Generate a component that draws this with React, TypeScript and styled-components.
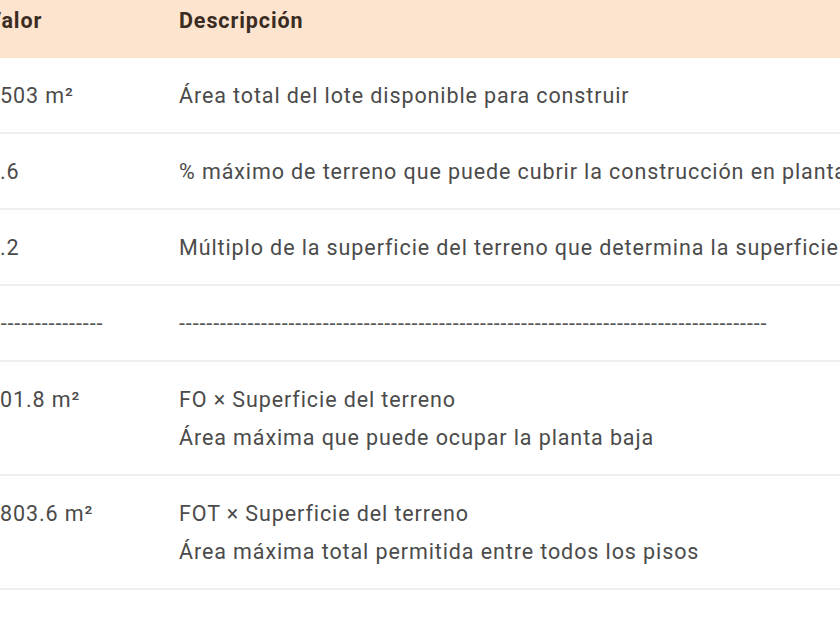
import React from 'react';
import styled, { createGlobalStyle } from 'styled-components';

const GlobalStyle = createGlobalStyle`
    html, body {
        margin: 0;
        padding: 0;
        background: #ffffff;
    }
`;

const Page = styled.div`
    width: 840px;
    height: 630px;
    overflow: hidden;
    background: #ffffff;
    font-family: Roboto, 'Noto Sans', Arial, sans-serif;
`;

const Table = styled.table`
    margin: -18px 0 0 -25px;
    border-collapse: collapse;
    width: 1200px;
    table-layout: fixed;
`;

const HeadCell = styled.th`
    background: #fde4cf;
    color: #3a2c22;
    font-weight: 700;
    font-size: 21.5px;
    letter-spacing: 0.9px;
    line-height: 38px;
    text-align: left;
    padding: 20px 12px 18px;
    white-space: nowrap;
`;

const Cell = styled.td`
    color: #4b4b4b;
    font-size: 21.5px;
    letter-spacing: 0.9px;
    line-height: 38px;
    text-align: left;
    vertical-align: top;
    padding: 19px 12px 17px;
    border-bottom: 2px solid #efefef;
    white-space: nowrap;
`;

const Dashes = styled.span`
    color: #555555;
`;

type Row = {
    value: string;
    lines: string[];
    dashed?: boolean;
};

const rows: Row[] = [
    { value: '1503 m²', lines: ['Área total del lote disponible para construir'] },
    {
        value: '0.6',
        lines: ['% máximo de terreno que puede cubrir la construcción en planta baja'],
    },
    {
        value: '1.2',
        lines: ['Múltiplo de la superficie del terreno que determina la superficie total construible'],
    },
    { value: '-'.repeat(17), lines: ['-'.repeat(86)], dashed: true },
    {
        value: '901.8 m²',
        lines: ['FO × Superficie del terreno', 'Área máxima que puede ocupar la planta baja'],
    },
    {
        value: '1803.6 m²',
        lines: ['FOT × Superficie del terreno', 'Área máxima total permitida entre todos los pisos'],
    },
];

const App = () => {
    return (
        <Page>
            <GlobalStyle />
            <Table>
                <colgroup>
                    <col style={{ width: 192 }} />
                    <col />
                </colgroup>
                <thead>
                    <tr>
                        <HeadCell>Valor</HeadCell>
                        <HeadCell>Descripción</HeadCell>
                    </tr>
                </thead>
                <tbody>
                    {rows.map((row, i) => (
                        <tr key={i}>
                            <Cell>{row.dashed ? <Dashes>{row.value}</Dashes> : row.value}</Cell>
                            <Cell>
                                {row.lines.map((line, j) => (
                                    <div key={j}>{row.dashed ? <Dashes>{line}</Dashes> : line}</div>
                                ))}
                            </Cell>
                        </tr>
                    ))}
                </tbody>
            </Table>
        </Page>
    );
};

export default App;
